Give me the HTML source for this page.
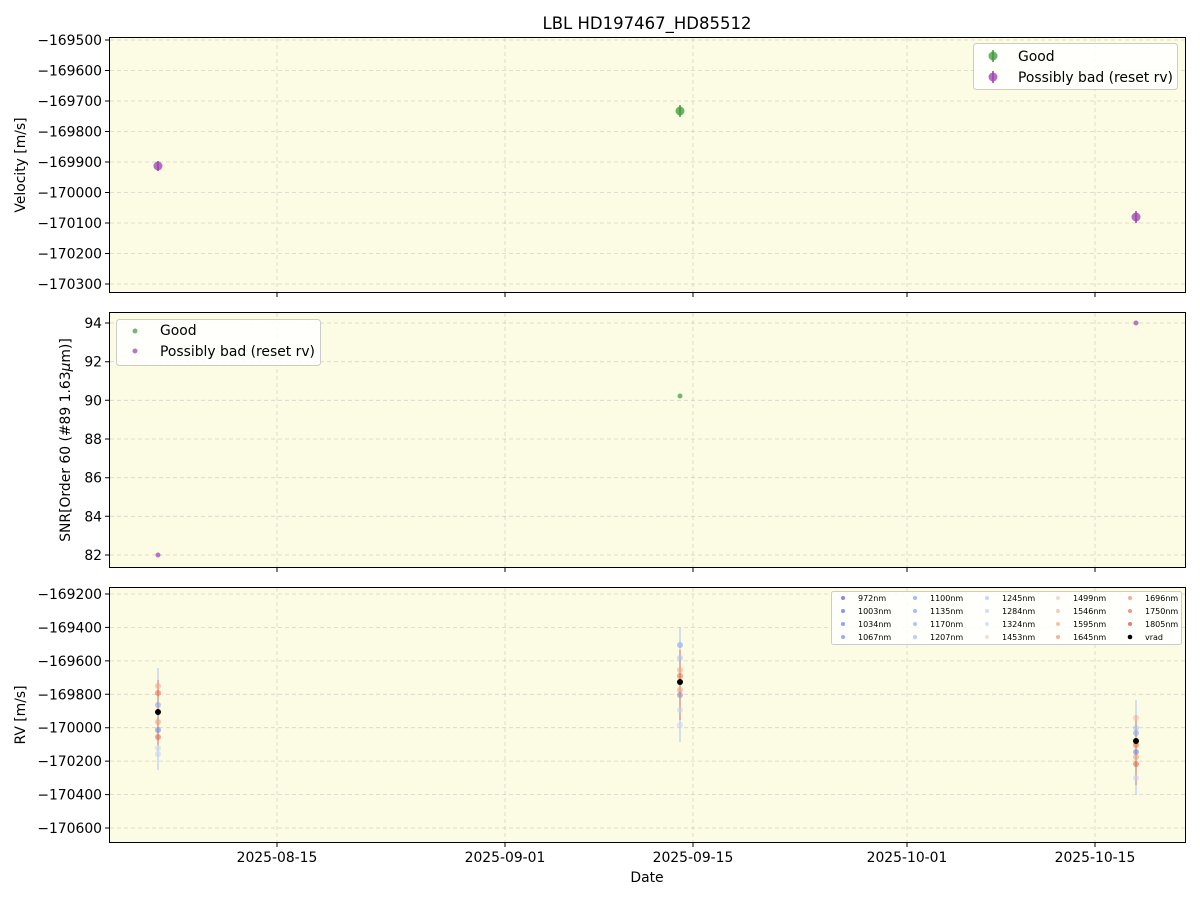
<!DOCTYPE html>
<html><head><meta charset="utf-8"><style>body{margin:0;background:#fff}svg{display:block}text{font-family:"DejaVu Sans","Liberation Sans",sans-serif;fill:#000}</style></head><body>
<svg width="1200" height="900" viewBox="0 0 1200 900" xmlns="http://www.w3.org/2000/svg">
<text x="647" y="29" font-size="16.5" text-anchor="middle">LBL HD197467_HD85512</text>
<g fill="#fcfbe3" stroke="#000" stroke-width="1">
<rect x="109.5" y="37.5" width="1076" height="255"/>
<rect x="109.5" y="312.5" width="1076" height="255"/>
<rect x="109.5" y="587.5" width="1076" height="255"/>
</g>
<g stroke="#b0b0b0" stroke-opacity="0.5" stroke-dasharray="4,3" stroke-width="0.8">
<path d="M277 38V292M505 38V292M693 38V292M907 38V292M1095 38V292"/>
<path d="M277 313V567M505 313V567M693 313V567M907 313V567M1095 313V567"/>
<path d="M277 588V842M505 588V842M693 588V842M907 588V842M1095 588V842"/>
<path d="M110 40H1185M110 70.5H1185M110 101H1185M110 131.5H1185M110 162H1185M110 192.5H1185M110 223H1185M110 253.5H1185M110 284H1185"/>
<path d="M110 323H1185M110 361.7H1185M110 400.3H1185M110 439H1185M110 477.7H1185M110 516.3H1185M110 555H1185"/>
<path d="M110 594H1185M110 627.4H1185M110 660.9H1185M110 694.3H1185M110 727.7H1185M110 761.1H1185M110 794.6H1185M110 828H1185"/>
</g>
<g stroke="#000" stroke-width="1">
<path d="M105 40H109M105 70.5H109M105 101H109M105 131.5H109M105 162H109M105 192.5H109M105 223H109M105 253.5H109M105 284H109"/>
<path d="M105 323H109M105 361.7H109M105 400.3H109M105 439H109M105 477.7H109M105 516.3H109M105 555H109"/>
<path d="M105 594H109M105 627.4H109M105 660.9H109M105 694.3H109M105 727.7H109M105 761.1H109M105 794.6H109M105 828H109"/>
<path d="M277 293V297M505 293V297M693 293V297M907 293V297M1095 293V297"/>
<path d="M277 568V572M505 568V572M693 568V572M907 568V572M1095 568V572"/>
<path d="M277 843V847M505 843V847M693 843V847M907 843V847M1095 843V847"/>
</g>
<g font-size="13.9" text-anchor="end">
<text x="102" y="45">−169500</text><text x="102" y="75.5">−169600</text><text x="102" y="106">−169700</text><text x="102" y="136.5">−169800</text><text x="102" y="167">−169900</text><text x="102" y="197.5">−170000</text><text x="102" y="228">−170100</text><text x="102" y="258.5">−170200</text><text x="102" y="289">−170300</text>
<text x="102" y="328">94</text><text x="102" y="366.7">92</text><text x="102" y="405.3">90</text><text x="102" y="444">88</text><text x="102" y="482.7">86</text><text x="102" y="521.3">84</text><text x="102" y="560">82</text>
<text x="102" y="599">−169200</text><text x="102" y="632.4">−169400</text><text x="102" y="665.9">−169600</text><text x="102" y="699.3">−169800</text><text x="102" y="732.7">−170000</text><text x="102" y="766.1">−170200</text><text x="102" y="799.6">−170400</text><text x="102" y="833">−170600</text>
</g>
<g font-size="13.9" text-anchor="middle">
<text x="277" y="862">2025-08-15</text><text x="505" y="862">2025-09-01</text><text x="693" y="862">2025-09-15</text><text x="907" y="862">2025-10-01</text><text x="1095" y="862">2025-10-15</text>
<text x="647" y="882">Date</text>
<text transform="translate(25 165) rotate(-90)">Velocity [m/s]</text>
<text transform="translate(70 440) rotate(-90)">SNR[Order 60 (#89 1.63<tspan font-style="italic">μ</tspan>m)]</text>
<text transform="translate(25 715) rotate(-90)">RV [m/s]</text>
</g>
<g stroke-width="1.5">
<path d="M158 161V171" stroke="#9b3fb0"/><circle cx="158" cy="166" r="4.5" fill="#9b3fb0" fill-opacity="0.75"/>
<path d="M680 105V117" stroke="#3a9a3a"/><circle cx="680" cy="111" r="4.5" fill="#3a9a3a" fill-opacity="0.75"/>
<path d="M1136 211V223" stroke="#9b3fb0"/><circle cx="1136" cy="217" r="4.5" fill="#9b3fb0" fill-opacity="0.75"/>
</g>
<rect x="973.5" y="43.5" width="204" height="46" rx="3" fill="#fff" fill-opacity="0.85" stroke="#ccc"/>
<path d="M993 50V62" stroke-width="1.5" stroke="#3a9a3a"/>
<circle cx="993" cy="56" r="4.5" fill="#3a9a3a" fill-opacity="0.75"/>
<path d="M993 71V83" stroke="#9b3fb0" stroke-width="1.5"/>
<circle cx="993" cy="77" r="4.5" fill="#9b3fb0" fill-opacity="0.75"/>
<text x="1018" y="61" font-size="13.9">Good</text>
<text x="1018" y="82" font-size="13.9">Possibly bad (reset rv)</text>
<circle cx="158" cy="555" r="2.5" fill="#9b3fb0" fill-opacity="0.7"/>
<circle cx="680" cy="396" r="2.5" fill="#3a9a3a" fill-opacity="0.7"/>
<circle cx="1136" cy="323" r="2.5" fill="#9b3fb0" fill-opacity="0.7"/>
<rect x="116.5" y="319.5" width="204" height="46" rx="3" fill="#fff" fill-opacity="0.85" stroke="#ccc"/>
<circle cx="135" cy="331" r="2.5" fill="#3a9a3a" fill-opacity="0.7"/>
<circle cx="135" cy="351" r="2.5" fill="#9b3fb0" fill-opacity="0.7"/>
<text x="160" y="335" font-size="13.9">Good</text>
<text x="160" y="356" font-size="13.9">Possibly bad (reset rv)</text>
<g stroke-width="2" stroke-opacity="0.5">
<path d="M158 668V770" stroke="#aac4f5"/>
<path d="M680 627V742" stroke="#aac4f5"/>
<path d="M1136 700V795" stroke="#aac4f5"/>
<path d="M158 680V745" stroke="#e88a6a"/>
<path d="M680 650V720" stroke="#e88a6a"/>
<path d="M1136 715V785" stroke="#e88a6a"/>
</g>
<g fill-opacity="0.6">
<circle cx="158" cy="686" r="3" fill="#f2a98e"/><circle cx="158" cy="693" r="3" fill="#e8704f"/><circle cx="158" cy="705" r="3" fill="#8aa8f0"/><circle cx="158" cy="722" r="3" fill="#f0a080"/><circle cx="158" cy="730" r="3" fill="#6f8ae0"/><circle cx="158" cy="737" r="3" fill="#e06a50"/><circle cx="158" cy="748" r="3" fill="#c8d6f0"/><circle cx="158" cy="754" r="3" fill="#c8d6f0"/>
<circle cx="680" cy="645" r="3" fill="#8aa8f0"/><circle cx="680" cy="658" r="3" fill="#aac4f5"/><circle cx="680" cy="670" r="3" fill="#f2a98e"/><circle cx="680" cy="676" r="3" fill="#e8704f"/><circle cx="680" cy="690" r="3" fill="#f0a080"/><circle cx="680" cy="695" r="3" fill="#9b8ac0"/><circle cx="680" cy="710" r="3" fill="#c8d6f0"/><circle cx="680" cy="725" r="3" fill="#c8d6f0"/>
<circle cx="1136" cy="718" r="3" fill="#f2c0a8"/><circle cx="1136" cy="728" r="3" fill="#aac4f5"/><circle cx="1136" cy="733" r="3" fill="#8aa8f0"/><circle cx="1136" cy="745" r="3" fill="#e8704f"/><circle cx="1136" cy="752" r="3" fill="#6f8ae0"/><circle cx="1136" cy="757" r="3" fill="#f0a080"/><circle cx="1136" cy="764" r="3" fill="#e06a50"/><circle cx="1136" cy="778" r="3" fill="#c8d6f0"/>
</g>
<circle cx="158" cy="712" r="3" fill="#000"/><circle cx="680" cy="682" r="3" fill="#000"/><circle cx="1136" cy="741" r="3" fill="#000"/>
<rect x="831.5" y="591.5" width="350" height="53" rx="2" fill="#fff" fill-opacity="0.85" stroke="#ccc"/>
<g font-size="8">
<g fill-opacity="0.8">
<circle cx="843" cy="598" r="2" fill="#6070e0"/><circle cx="843" cy="611" r="2" fill="#6a80e0"/><circle cx="843" cy="624" r="2" fill="#7090f0"/><circle cx="843" cy="637" r="2" fill="#7a98f0"/>
<circle cx="915" cy="598" r="2" fill="#8aa8f5"/><circle cx="915" cy="611" r="2" fill="#90acf5"/><circle cx="915" cy="624" r="2" fill="#9cb8f5"/><circle cx="915" cy="637" r="2" fill="#a8c0f8"/>
<circle cx="987" cy="598" r="2" fill="#b8ccf8"/><circle cx="987" cy="611" r="2" fill="#c4d4f5"/><circle cx="987" cy="624" r="2" fill="#d0dcf2"/><circle cx="987" cy="637" r="2" fill="#e8d8d0"/>
<circle cx="1058" cy="598" r="2" fill="#f2d0c0"/><circle cx="1058" cy="611" r="2" fill="#f5c0a8"/><circle cx="1058" cy="624" r="2" fill="#f5b090"/><circle cx="1058" cy="637" r="2" fill="#f0a080"/>
<circle cx="1130" cy="598" r="2" fill="#f09a80"/><circle cx="1130" cy="611" r="2" fill="#e88068"/><circle cx="1130" cy="624" r="2" fill="#d86050"/><circle cx="1130" cy="637" r="2.3" fill="#000" fill-opacity="1"/>
</g>
<text x="858" y="601">972nm</text><text x="858" y="614">1003nm</text><text x="858" y="627">1034nm</text><text x="858" y="640">1067nm</text>
<text x="930" y="601">1100nm</text><text x="930" y="614">1135nm</text><text x="930" y="627">1170nm</text><text x="930" y="640">1207nm</text>
<text x="1002" y="601">1245nm</text><text x="1002" y="614">1284nm</text><text x="1002" y="627">1324nm</text><text x="1002" y="640">1453nm</text>
<text x="1073" y="601">1499nm</text><text x="1073" y="614">1546nm</text><text x="1073" y="627">1595nm</text><text x="1073" y="640">1645nm</text>
<text x="1145" y="601">1696nm</text><text x="1145" y="614">1750nm</text><text x="1145" y="627">1805nm</text><text x="1145" y="640">vrad</text>
</g>
</svg>
</body></html>
